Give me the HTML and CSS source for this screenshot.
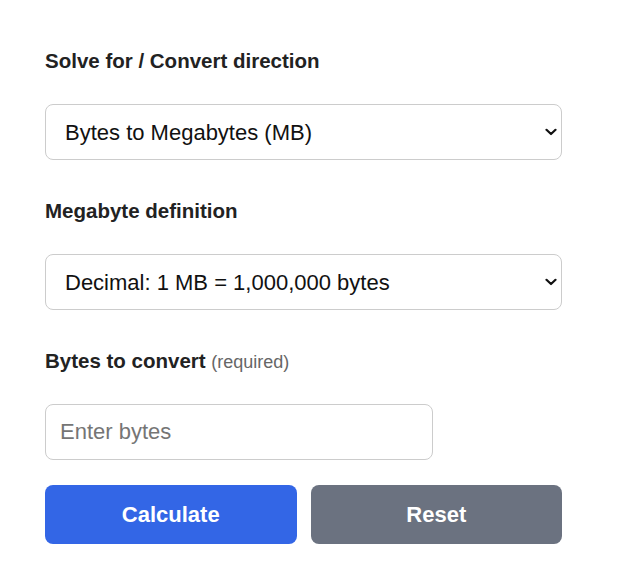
FILE: index.html
```html
<!DOCTYPE html>
<html lang="en">
<head>
<meta charset="utf-8">
<title>Bytes to MB</title>
<link rel="stylesheet" href="styles.css">
</head>
<body>
<form class="calc">
  <div class="field">
    <label class="label" for="dir">Solve for / Convert direction</label>
    <div class="select-wrap">
      <select id="dir" class="control select">
        <option>Bytes to Megabytes (MB)</option>
        <option>Megabytes (MB) to Bytes</option>
      </select>
      <svg class="chevron" width="12" height="8" viewBox="0 0 12 8" aria-hidden="true"><path d="M1.5 1.8 L6 6 L10.5 1.8" fill="none" stroke="#111" stroke-width="2.2" stroke-linecap="round" stroke-linejoin="round"/></svg>
    </div>
  </div>
  <div class="field">
    <label class="label" for="def">Megabyte definition</label>
    <div class="select-wrap">
      <select id="def" class="control select">
        <option>Decimal: 1 MB = 1,000,000 bytes</option>
        <option>Binary: 1 MiB = 1,048,576 bytes</option>
      </select>
      <svg class="chevron" width="12" height="8" viewBox="0 0 12 8" aria-hidden="true"><path d="M1.5 1.8 L6 6 L10.5 1.8" fill="none" stroke="#111" stroke-width="2.2" stroke-linecap="round" stroke-linejoin="round"/></svg>
    </div>
  </div>
  <div class="field">
    <label class="label" for="bytes">Bytes to convert <span class="hint">(required)</span></label>
    <input id="bytes" class="control input" type="text" placeholder="Enter bytes">
  </div>
  <div class="actions">
    <button type="button" class="btn btn-primary">Calculate</button>
    <button type="reset" class="btn btn-secondary">Reset</button>
  </div>
</form>
</body>
</html>
```
FILE: styles.css
```css
html, body {
  margin: 0;
  padding: 0;
  background: #ffffff;
}
body {
  font-family: "Liberation Sans", Arial, sans-serif;
  color: #222222;
}
.calc {
  width: 517px;
  padding: 47px 0 0 45px;
}
.field {
  display: flex;
  flex-direction: column;
  align-items: flex-start;
}
.field + .field {
  margin-top: 37px;
}
.label {
  font-size: 20.5px;
  font-weight: bold;
  line-height: 27px;
  margin-bottom: 30px;
  color: #222222;
}
.hint {
  font-weight: normal;
  font-size: 18px;
  line-height: 1;
  color: #666666;
}
.select-wrap {
  position: relative;
  width: 100%;
}
.chevron {
  position: absolute;
  right: 5px;
  top: 24px;
  pointer-events: none;
}
.control {
  box-sizing: border-box;
  height: 56px;
  border: 1px solid #cccccc;
  border-radius: 8px;
  background: #ffffff;
  font-family: "Liberation Sans", Arial, sans-serif;
  font-size: 22px;
  color: #111111;
  margin: 0;
  display: block;
}
.select {
  width: 100%;
  appearance: none;
  -webkit-appearance: none;
  padding: 0 30px 0 19px;
}
.input {
  width: 75%;
  padding: 0 14px;
}
.input::placeholder {
  color: #757575;
}
.actions {
  display: flex;
  gap: 14px;
  margin-top: 25px;
}
.btn {
  flex: 1;
  height: 59px;
  border: none;
  border-radius: 8px;
  color: #ffffff;
  font-family: "Liberation Sans", Arial, sans-serif;
  font-size: 22px;
  font-weight: bold;
  padding: 0;
}
.btn-primary {
  background: #3366e6;
}
.btn-secondary {
  background: #6b7280;
}
```
